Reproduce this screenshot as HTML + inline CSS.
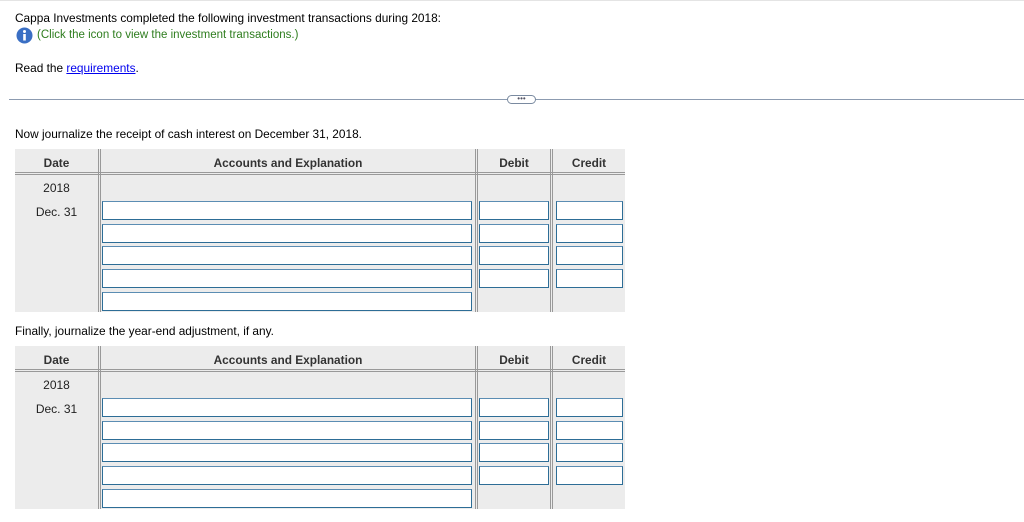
<!DOCTYPE html>
<html><head><style>
*{margin:0;padding:0;box-sizing:border-box}
body{width:1024px;height:522px;background:#fff;font-family:"Liberation Sans",Arial,sans-serif;font-size:11.85px;color:#000;position:relative;overflow:hidden}
.a{position:absolute}
.tbl{position:absolute;left:15px;width:610px;height:163px;background:#ececec}
.hd{position:absolute;top:0;height:25px;font-weight:bold;font-size:11.85px;color:#333;text-align:center;line-height:28px}
.vl{position:absolute;top:0;bottom:0;width:3px;border-left:1px solid #999;border-right:1px solid #999}
.hl{position:absolute;left:0;right:0;top:23px;height:3px;border-top:1px solid #999;border-bottom:1px solid #999}
.in{position:absolute;height:19px;background:#fff;border:1px solid #2d6d96;border-top-color:#5b8db3}
.t{position:absolute;width:83px;text-align:center;font-size:12px;color:#222}
</style></head><body>
<div class="a" style="left:0;top:0;width:1024px;height:1px;background:#e4e4e4"></div>
<div class="a" style="left:15px;top:11px">Cappa Investments completed the following investment transactions during 2018:</div>
<svg class="a" style="left:16px;top:27px" width="17" height="17" viewBox="0 0 17 17"><circle cx="8.5" cy="8.5" r="8" fill="#3a6fc4"/><circle cx="8.5" cy="4.5" r="1.5" fill="#fff"/><rect x="7.2" y="7" width="2.6" height="6.5" fill="#fff"/></svg>
<div class="a" style="left:37px;top:29px;color:#2e7d1e;font-size:11.5px">(Click the icon to view the investment transactions.)</div>
<div class="a" style="left:15px;top:61px">Read the <span style="color:#0000ee;text-decoration:underline">requirements</span>.</div>
<div class="a" style="left:9px;top:99px;width:1015px;height:1px;background:#8c9bb0"></div>
<div class="a" style="left:507px;top:95px;width:29px;height:9px;border:1px solid #7a8aa0;border-radius:5px;background:#fff;font-size:8px;line-height:5px;text-align:center;color:#556">&bull;&bull;&bull;</div>
<div class="a" style="left:15px;top:127px">Now journalize the receipt of cash interest on December 31, 2018.</div>
<div class="a" style="left:15px;top:324px">Finally, journalize the year-end adjustment, if any.</div>

<div class="tbl" style="top:149px">
<div class="hd" style="left:0;width:83px">Date</div>
<div class="hd" style="left:86px;width:374px">Accounts and Explanation</div>
<div class="hd" style="left:463px;width:72px">Debit</div>
<div class="hd" style="left:538px;width:72px">Credit</div>
<div class="hl"></div>
<div class="vl" style="left:83px"></div><div class="vl" style="left:460px"></div><div class="vl" style="left:535px"></div>
<div class="t" style="top:32px">2018</div><div class="t" style="top:56px">Dec. 31</div>
<div class="in" style="left:87px;top:52px;width:370px"></div>
<div class="in" style="left:87px;top:75px;width:370px"></div>
<div class="in" style="left:87px;top:97px;width:370px"></div>
<div class="in" style="left:87px;top:120px;width:370px"></div>
<div class="in" style="left:87px;top:143px;width:370px"></div>
<div class="in" style="left:464px;top:52px;width:70px"></div><div class="in" style="left:541px;top:52px;width:67px"></div>
<div class="in" style="left:464px;top:75px;width:70px"></div><div class="in" style="left:541px;top:75px;width:67px"></div>
<div class="in" style="left:464px;top:97px;width:70px"></div><div class="in" style="left:541px;top:97px;width:67px"></div>
<div class="in" style="left:464px;top:120px;width:70px"></div><div class="in" style="left:541px;top:120px;width:67px"></div>
</div>

<div class="tbl" style="top:346px">
<div class="hd" style="left:0;width:83px">Date</div>
<div class="hd" style="left:86px;width:374px">Accounts and Explanation</div>
<div class="hd" style="left:463px;width:72px">Debit</div>
<div class="hd" style="left:538px;width:72px">Credit</div>
<div class="hl"></div>
<div class="vl" style="left:83px"></div><div class="vl" style="left:460px"></div><div class="vl" style="left:535px"></div>
<div class="t" style="top:32px">2018</div><div class="t" style="top:56px">Dec. 31</div>
<div class="in" style="left:87px;top:52px;width:370px"></div>
<div class="in" style="left:87px;top:75px;width:370px"></div>
<div class="in" style="left:87px;top:97px;width:370px"></div>
<div class="in" style="left:87px;top:120px;width:370px"></div>
<div class="in" style="left:87px;top:143px;width:370px"></div>
<div class="in" style="left:464px;top:52px;width:70px"></div><div class="in" style="left:541px;top:52px;width:67px"></div>
<div class="in" style="left:464px;top:75px;width:70px"></div><div class="in" style="left:541px;top:75px;width:67px"></div>
<div class="in" style="left:464px;top:97px;width:70px"></div><div class="in" style="left:541px;top:97px;width:67px"></div>
<div class="in" style="left:464px;top:120px;width:70px"></div><div class="in" style="left:541px;top:120px;width:67px"></div>
</div>
</body></html>
